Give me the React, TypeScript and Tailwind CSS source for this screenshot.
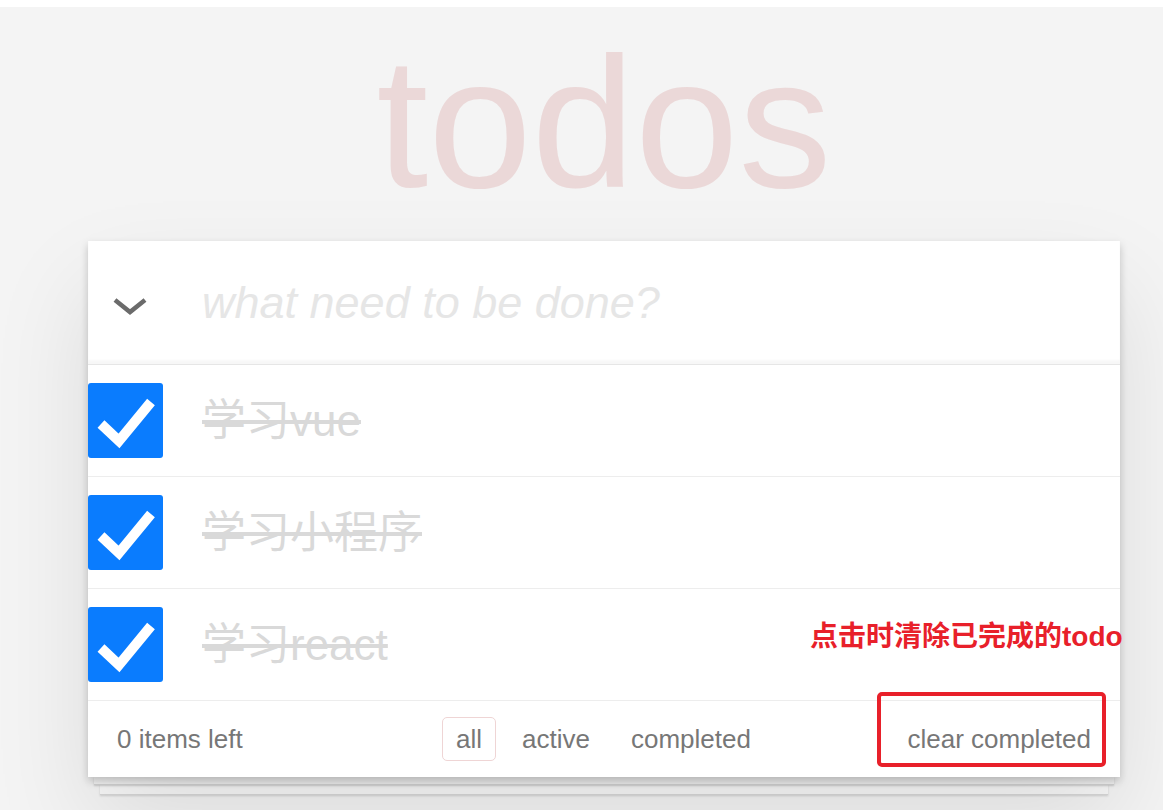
import { useState } from 'react';

type Todo = { id: number; title: string; done: boolean };

const sans = 'font-["Liberation_Sans","Noto_Sans_CJK_SC",sans-serif]';

export default function App() {
  const [todos] = useState<Todo[]>([
    { id: 1, title: '学习vue', done: true },
    { id: 2, title: '学习小程序', done: true },
    { id: 3, title: '学习react', done: true },
  ]);

  const left = todos.filter((t) => !t.done).length;

  return (
    <div className={`min-h-[810px] bg-[#f4f4f4] ${sans}`}>
      {/* top strip */}
      <div className="h-[7px] bg-white" />

      <div className="ml-[88px] w-[1032px] pt-[23px]">
        <h1 className="h-[187px] text-center text-[186px] leading-[186px] font-normal text-[#ebd8d8]">
          todos
        </h1>

        {/* card */}
        <div className="relative z-10 mt-[24px] bg-white shadow-[0_4px_8px_rgba(0,0,0,0.2),0_47px_94px_rgba(0,0,0,0.1)]">
          <div className="flex h-[124px] items-center border-b border-[#e6e6e6] shadow-[inset_0_-4px_2px_rgba(0,0,0,0.03)]">
            <div className="flex w-[114px] pl-[25px] pt-[6px]">
              <svg width="34" height="18" viewBox="0 0 34 18">
                <polyline points="2,3 17,15 32,3" fill="none" stroke="#6b6b6b" strokeWidth="4.5" />
              </svg>
            </div>
            <input
              className="flex-1 bg-transparent text-[45px] italic text-[#4d4d4d] outline-none placeholder:text-[#e6e6e6]"
              placeholder="what need to be done?"
            />
          </div>

          <ul>
            {todos.map((t) => (
              <li key={t.id} className="flex h-[112px] items-center border-b border-[#ededed]">
                <div className="flex h-[75px] w-[75px] items-center justify-center rounded-[3px] bg-[#0a7cfe]">
                  <svg width="75" height="75" viewBox="0 0 75 75">
                    <polyline points="13,41 31,58 63,19" fill="none" stroke="#fff" strokeWidth="10" />
                  </svg>
                </div>
                <span className="ml-[39px] text-[44px] leading-[56px] text-[#d9d9d9] line-through">
                  {t.title}
                </span>
              </li>
            ))}
          </ul>

          {/* footer */}
          <div className="relative grid h-[76px] grid-cols-[1fr_auto_1fr] items-center px-[29px] text-[26px] text-[#777]">
            <span>{left} items left</span>
            <ul className="flex">
              <li className="mx-[6px] rounded-[5px] border border-[#efd5d5] px-[13px] py-[6px] leading-[30px]">all</li>
              <li className="mx-[6px] border border-transparent px-[13px] py-[6px] leading-[30px]">active</li>
              <li className="mx-[6px] border border-transparent px-[14px] py-[6px] leading-[30px]">completed</li>
            </ul>
            <span className="justify-self-end">clear completed</span>

            {/* annotation box */}
            <div className="absolute left-[789px] top-[-9px] h-[75px] w-[229px] rounded-[5px] border-[4px] border-[#e8202a]" />
          </div>

          {/* annotation text */}
          <div className="absolute left-[722px] top-[381px] whitespace-nowrap text-[28px] leading-[30px] font-bold text-[#e8202a]">
            点击时清除已完成的todo
          </div>
        </div>

        {/* stacked paper */}
        <div className="relative z-[5] mx-[6px] h-[8px] border-b border-[#d8d8d8] bg-[#f8f8f8] shadow-[0_1px_2px_rgba(0,0,0,0.15)]" />
        <div className="mx-[12px] h-[10px] border-b border-[#d8d8d8] bg-[#f8f8f8] shadow-[0_1px_2px_rgba(0,0,0,0.15)]" />
      </div>
    </div>
  );
}
